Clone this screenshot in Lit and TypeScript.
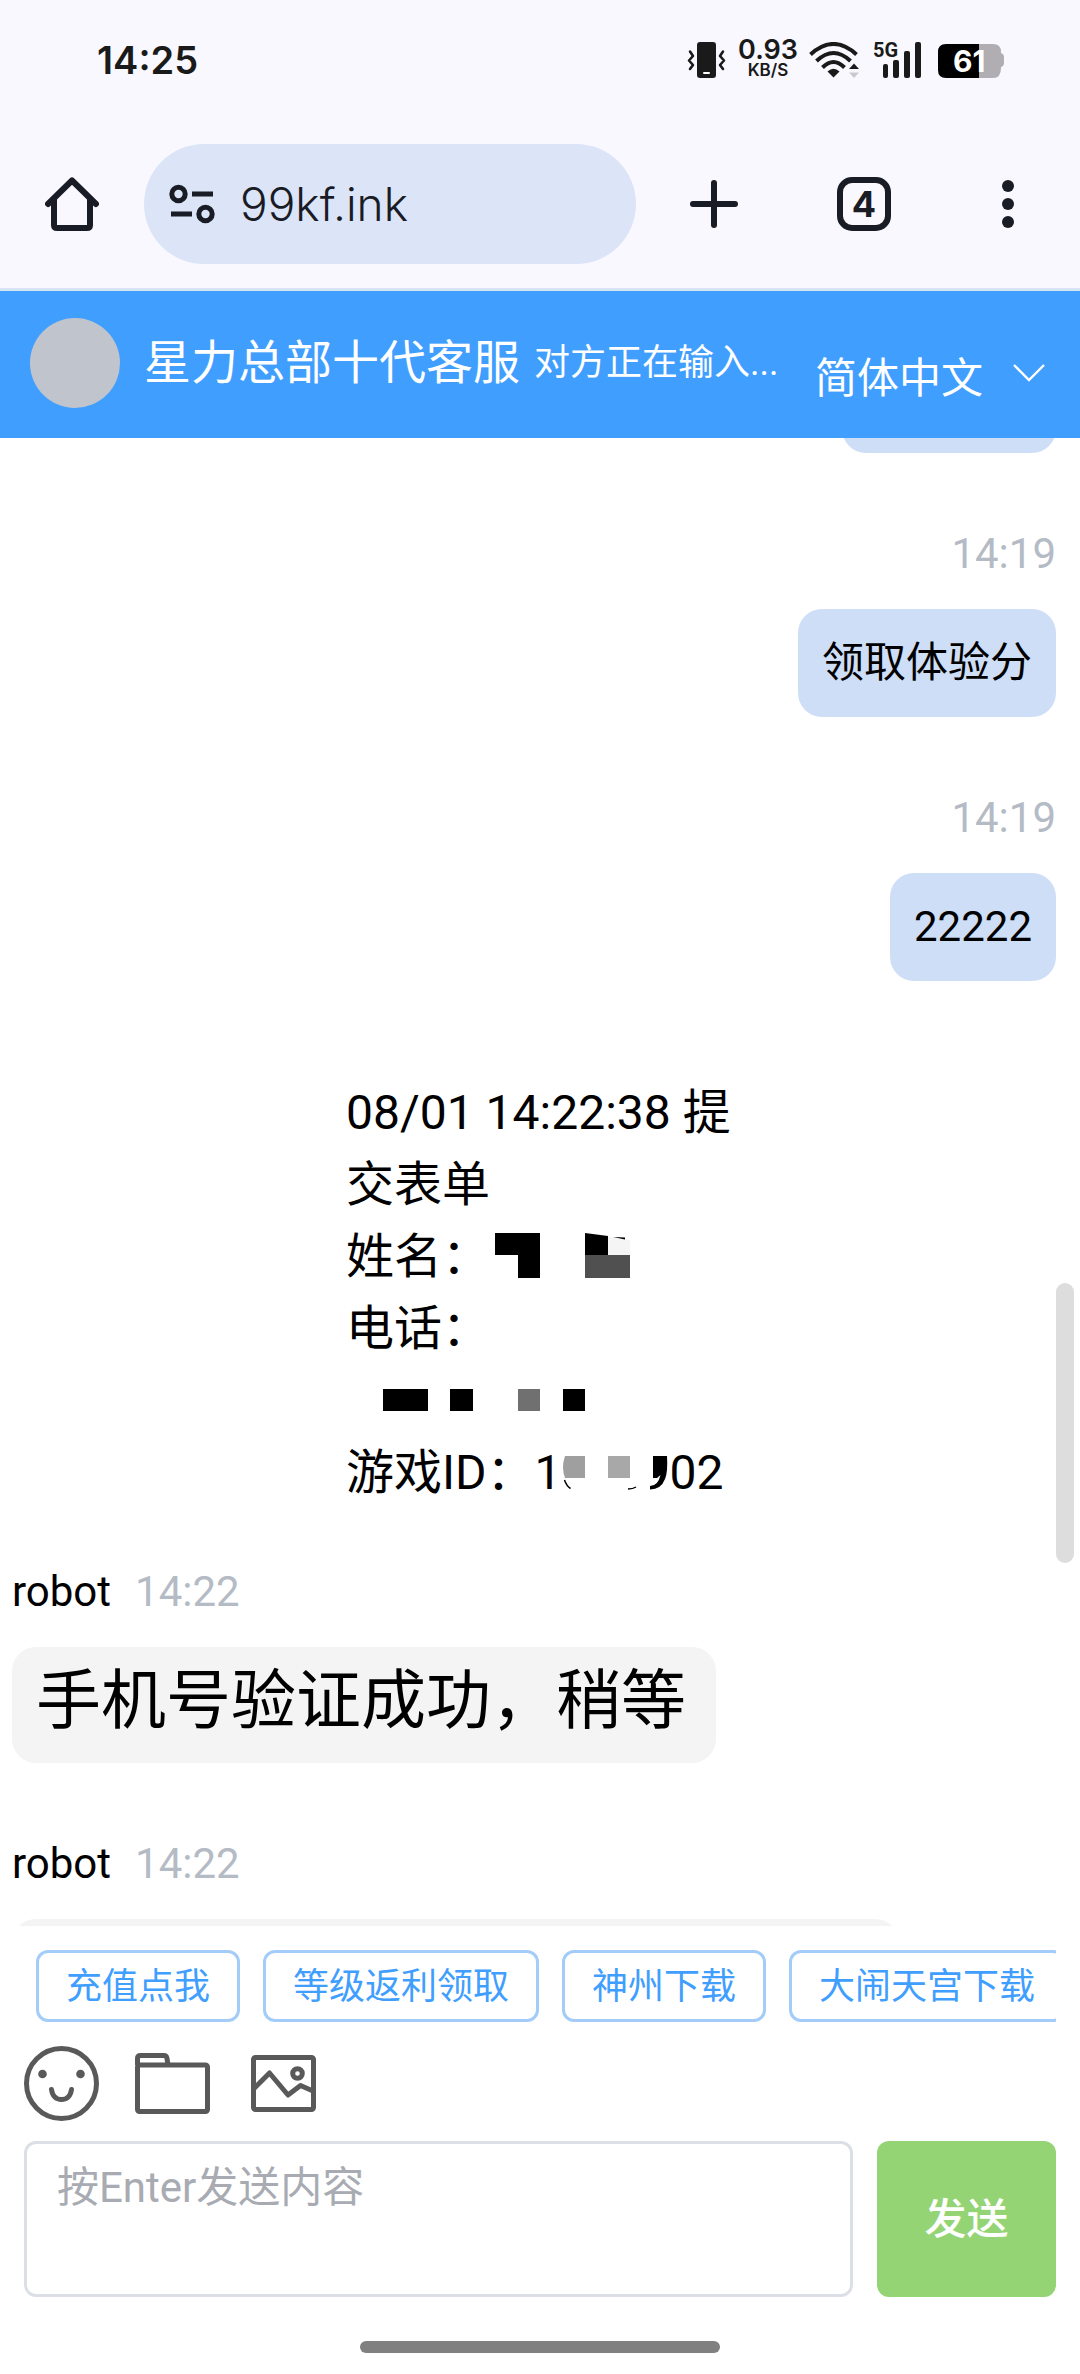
import { LitElement, html, css, svg } from "lit";
import { customElement } from "lit/decorators.js";

const INK = "#1a1a1a";
const NAVY = "#191b25";

@customElement("status-bar")
class StatusBar extends LitElement {
  static styles = css`
    :host {
      display: block;
    }
    .bar {
      display: flex;
      align-items: center;
      justify-content: space-between;
      height: 120px;
      padding: 0 76px 0 97px;
      box-sizing: border-box;
      font-family: Inter, "Liberation Sans", sans-serif;
      color: #1a1a1a;
    }
    .clock {
      font-size: 38px;
      font-weight: 600;
      line-height: 48px;
    }
    .icons {
      display: flex;
      align-items: center;
      gap: 12px;
    }
    .icons svg {
      display: block;
    }
    .speed {
      display: flex;
      flex-direction: column;
      align-items: center;
      width: 58px;
      font-weight: 600;
    }
    .rate {
      font-size: 27px;
      line-height: 20px;
    }
    .unit {
      font-size: 17px;
      line-height: 20px;
    }
    .net {
      font: 700 20px Roboto, sans-serif;
    }
    .level {
      font: 700 30px Inter, sans-serif;
    }
  `;
  render() {
    return html`
      <div class="bar">
        <time class="clock">14:25</time>
        <div class="icons">
          <svg width="40" height="36" viewBox="0 0 40 36" role="img" aria-label="振动">
            <rect x="10" y="0" width="19" height="36" rx="3" fill=${INK} />
            <rect x="16" y="30" width="7" height="2" rx="1" fill="#fff" />
            <path
              d="M3 9.500l3 4.500l-4 4.500l4 4.500l-3 4M36 9.500l-3 4.500l4 4.500l-4 4.500l3 4"
              fill="none" stroke=${INK} stroke-width="2.600" stroke-linecap="round" stroke-linejoin="round" />
          </svg>
          <div class="speed"><span class="rate">0.93</span><span class="unit">KB/S</span></div>
          <svg width="52" height="36" viewBox="0 0 52 36" role="img" aria-label="Wi-Fi">
            <g fill="none" stroke=${INK} stroke-width="4">
              <path d="M1.500 12.500Q24.500 -8.500 47.500 12.500" />
              <path d="M7.500 19Q24.500 3 41.500 19" />
              <path d="M13.500 25.500Q24.500 14.500 35.500 25.500" />
            </g>
            <path d="M18.500 29.500Q24.500 24 30.500 29.500L24.500 35.500Z" fill=${INK} />
            <path d="M40 27L45 21.500L50 27Z" fill=${INK} />
            <path d="M40 30.500L45 36L50 30.500Z" fill="#c9c9d0" />
          </svg>
          <svg width="53" height="44" viewBox="0 -4 53 44" role="img" aria-label="5G 信号">
            <text class="net" x="0" y="15" fill=${INK}>5G</text>
            <rect x="10" y="22" width="5" height="14" rx="2" fill=${INK} />
            <rect x="20" y="18" width="6" height="18" rx="2" fill=${INK} />
            <rect x="31" y="9" width="6" height="27" rx="2" fill=${INK} />
            <rect x="42" y="0" width="6" height="36" rx="2" fill=${INK} />
          </svg>
          <svg width="66" height="36" viewBox="0 0 66 36" role="img" aria-label="电量 61">
            <path d="M41 2h14q8 0 8 8v1q3 1 3 4v6q0 3-3 4v1q0 10-8 10h-14z" fill="#b0aeb3" />
            <path d="M41 2h-33q-8 0-8 8v18q0 8 8 8h33z" fill="#000" />
            <text class="level" x="15" y="30" fill="#fff">61</text>
          </svg>
        </div>
      </div>
    `;
  }
}

@customElement("browser-bar")
class BrowserBar extends LitElement {
  static styles = css`
    :host {
      display: block;
    }
    .bar {
      display: flex;
      align-items: center;
      height: 168px;
      padding: 0 45px;
      box-sizing: border-box;
    }
    button {
      display: block;
      padding: 0;
      border: 0;
      background: none;
      font: inherit;
      color: #191b25;
    }
    svg {
      display: block;
    }
    .address {
      flex: 1;
      display: flex;
      align-items: center;
      gap: 24px;
      min-width: 0;
      height: 120px;
      margin: 0 51px 0 45px;
      padding: 0 24px;
      border-radius: 60px;
      box-sizing: border-box;
      background: #dce4f8;
    }
    .url {
      flex: 1;
      min-width: 0;
      padding: 0;
      border: 0;
      outline: 0;
      background: none;
      color: #191b25;
      font: 300 46px/60px Inter, Roboto, sans-serif;
    }
    .actions {
      display: flex;
      gap: 90px;
    }
    .count {
      font: 700 36px Inter, sans-serif;
    }
  `;
  render() {
    return html`
      <nav class="bar">
        <button aria-label="主页">
          <svg width="54" height="54" viewBox="0 0 54 54" fill="none" stroke=${NAVY} stroke-width="6" stroke-linecap="round" stroke-linejoin="round">
            <path d="M3 27L27 3.500L51 27" />
            <path d="M9 22V48q0 3 3 3H42q3 0 3-3V22" />
          </svg>
        </button>
        <div class="address">
          <svg width="48" height="42" viewBox="0 0 48 42" fill="none" stroke=${NAVY} stroke-width="5" aria-hidden="true">
            <circle cx="10.500" cy="11" r="6.700" />
            <path d="M24 11H45M3 31H24" />
            <circle cx="37.500" cy="31" r="6.700" />
          </svg>
          <input class="url" aria-label="网址" value="99kf.ink" />
        </div>
        <div class="actions">
          <button aria-label="新标签页">
            <svg width="60" height="54" viewBox="0 0 60 54" stroke=${NAVY} stroke-width="6" stroke-linecap="round">
              <path d="M27 6V48M6 27H48" />
            </svg>
          </button>
          <button aria-label="标签页 4">
            <svg width="54" height="54" viewBox="0 0 54 54">
              <rect x="3" y="3" width="48" height="48" rx="12" fill="none" stroke=${NAVY} stroke-width="6" />
              <text class="count" x="27" y="40" text-anchor="middle" fill=${NAVY}>4</text>
            </svg>
          </button>
          <button aria-label="更多">
            <svg width="54" height="54" viewBox="0 0 54 54" fill=${NAVY}>
              <circle cx="27" cy="9" r="6" />
              <circle cx="27" cy="27" r="6" />
              <circle cx="27" cy="45" r="6" />
            </svg>
          </button>
        </div>
      </nav>
    `;
  }
}

@customElement("chat-message")
class ChatMessage extends LitElement {
  static properties = {
    sender: { type: String },
    time: { type: String },
    text: { type: String },
    mine: { type: Boolean },
    large: { type: Boolean },
    blank: { type: Number },
  };
  declare sender: string;
  declare time: string;
  declare text: string;
  declare mine: boolean;
  declare large: boolean;
  declare blank: number;

  static styles = css`
    :host {
      display: block;
      margin-bottom: 76px;
    }
    .message {
      display: flex;
      flex-direction: column;
      align-items: flex-start;
      gap: 30px;
    }
    .mine {
      align-items: flex-end;
    }
    .label {
      display: flex;
      gap: 24px;
      font-size: 42px;
      line-height: 50px;
    }
    .time {
      color: #b4bbc5;
    }
    .bubble {
      min-height: 108px;
      padding: 22px 24px;
      border-radius: 24px;
      box-sizing: border-box;
      background: #f4f4f4;
      font-size: 42px;
      line-height: 64px;
    }
    .mine .bubble {
      background: #cddef6;
    }
    .large {
      padding: 18px 30px 26px 24px;
      font-size: 65px;
      line-height: 72px;
    }
  `;
  render() {
    const size = this.blank ? `width:${this.blank}px` : "";
    return html`
      <article class="message ${this.mine ? "mine" : ""}">
        ${this.time
          ? html`<div class="label">
              ${this.sender ? html`<span>${this.sender}</span>` : ""}<time class="time">${this.time}</time>
            </div>`
          : ""}
        <div class="bubble ${this.large ? "large" : ""}" style=${size}>${this.text ?? ""}</div>
      </article>
    `;
  }
}

type Block = [number, number, number, number, string];
const blocks = (list: Block[]) =>
  list.map(([x, y, w, h, fill]) => svg`<rect x=${x} y=${y} width=${w} height=${h} fill=${fill} />`);

@customElement("app-root")
class AppRoot extends LitElement {
  static styles = css`
    :host {
      display: block;
    }
    .page {
      display: flex;
      flex-direction: column;
      height: 100vh;
      background: #fff;
      color: #000;
      font-family: Roboto, "Noto Sans CJK SC", sans-serif;
    }
    .chrome {
      background: #f9f8ff;
      border-bottom: 3px solid #d6e4f6;
    }
    .header {
      display: flex;
      align-items: center;
      height: 147px;
      padding: 0 30px 3px;
      box-sizing: border-box;
      background: #409eff;
      color: #fff;
    }
    .avatar {
      width: 90px;
      height: 90px;
      margin-right: 24px;
      border-radius: 50%;
      background: #c0c4cc;
    }
    .title {
      flex: 1;
      display: flex;
      align-items: center;
      gap: 14px;
      margin: 0;
      font-size: 47px;
      font-weight: 400;
      line-height: 60px;
      white-space: nowrap;
    }
    .typing {
      font-size: 36px;
    }
    .lang {
      display: grid;
      align-items: center;
      margin-top: 32px;
    }
    .lang select,
    .lang svg {
      grid-area: 1 / 1;
    }
    .lang svg {
      justify-self: end;
      margin: 0 4px 12px 0;
      pointer-events: none;
    }
    .lang select {
      width: 235px;
      padding: 0;
      border: 0;
      appearance: none;
      background: none;
      color: #fff;
      font: inherit;
      font-size: 42px;
      line-height: 60px;
    }
    .chat {
      position: relative;
      flex: 1;
      min-height: 0;
      overflow: hidden;
    }
    .list {
      margin-top: -93px;
      padding: 0 24px 0 12px;
    }
    .thumb {
      position: absolute;
      bottom: 363px;
      right: 6px;
      width: 18px;
      height: 280px;
      border-radius: 9px;
      background: #dddddd;
    }
    .form {
      width: 388px;
      margin: -57px auto 58px;
      padding: 77px 0 0 12px;
      font-size: 48px;
      line-height: 72px;
    }
    .form p {
      display: flex;
      align-items: center;
      margin: 0;
      min-height: 72px;
    }
    .form svg {
      flex: none;
    }
    .form .wrap {
      display: block;
    }
    .footer {
      display: flex;
      flex-direction: column;
      padding: 24px 24px 21px;
      background: #fff;
    }
    .chips {
      display: flex;
      gap: 23px;
      padding-left: 12px;
      overflow: hidden;
    }
    .chip {
      flex: none;
      height: 72px;
      padding: 2px 27px 0;
      border: 3px solid #a3cdf8;
      border-radius: 12px;
      background: #fff;
      color: #409eff;
      font: inherit;
      font-size: 36px;
      line-height: 60px;
    }
    .tools {
      display: flex;
      gap: 36px;
      margin: 24px 0 20px;
    }
    .tool {
      padding: 0;
      border: 0;
      background: none;
    }
    .tool svg {
      display: block;
    }
    .compose {
      display: flex;
      gap: 24px;
    }
    .input {
      flex: 1;
      min-width: 0;
      height: 156px;
      padding: 14px 30px;
      border: 3px solid #dcdfe6;
      border-radius: 12px;
      box-sizing: border-box;
      resize: none;
      background: #fff;
      font: inherit;
      font-size: 42px;
      line-height: 60px;
    }
    .input::placeholder {
      color: #a8abb2;
      opacity: 1;
    }
    .send {
      width: 179px;
      padding: 0 0 8px;
      border: 0;
      border-radius: 12px;
      background: #95d475;
      color: #fff;
      font: inherit;
      font-size: 42px;
      font-weight: 500;
    }
    .handle {
      align-self: center;
      width: 360px;
      height: 12px;
      margin-top: 44px;
      border-radius: 6px;
      background: #808080;
    }
  `;
  render() {
    const chips = ["充值点我", "等级返利领取", "神州下载", "大闹天宫下载"];
    return html`
      <main class="page">
        <div class="chrome">
          <status-bar></status-bar>
          <browser-bar></browser-bar>
        </div>
        <header class="header">
          <div class="avatar"></div>
          <h1 class="title">星力总部十代客服<span class="typing">对方正在输入...</span></h1>
          <div class="lang">
            <select aria-label="语言">
              <option>简体中文</option>
            </select>
            <svg width="34" height="20" viewBox="0 0 34 20" fill="none" stroke="#fff" stroke-width="2.400" aria-hidden="true">
              <path d="M2 2L17 17L32 2" />
            </svg>
          </div>
        </header>
        <section class="chat">
          <div class="list">
            <chat-message mine blank="214"></chat-message>
            <chat-message mine time="14:19" text="领取体验分"></chat-message>
            <chat-message mine time="14:19" text="22222"></chat-message>
            <div class="form">
              <p class="wrap">08/01 14:22:38 提交表单</p>
              <p>
                姓名：
                <svg width="144" height="48" viewBox="0 0 144 48" aria-hidden="true">
                  ${blocks([
                    [5, 0, 45, 22, "#000"],
                    [28, 22, 22, 23, "#000"],
                    [95, 22, 45, 23, "#505050"],
                  ])}
                  <path d="M95 0L118 3V22H95Z" fill="#000" />
                  <path d="M118 3.500L140 7V22H118Z" fill="#f5f5f5" />
                  <path d="M123 4L135 4.500V6.500Z" fill="#000" />
                </svg>
              </p>
              <p>电话：</p>
              <p>
                <svg width="240" height="24" viewBox="0 0 240 24" aria-hidden="true">
                  ${blocks([
                    [37, 0, 45, 22, "#000"],
                    [104, 0, 23, 22, "#000"],
                    [172, 0, 22, 22, "#707070"],
                    [217, 0, 22, 22, "#000"],
                  ])}
                </svg>
              </p>
              <p>
                游戏ID：1<svg width="108" height="36" viewBox="3 0 108 36" aria-hidden="true">
                  ${blocks([[49, 1, 22, 22, "#a8a8a8"]])}
                  <path d="M6 1H26V23H6Q2 12 6 1Z" fill="#9f9f9f" />
                  <path d="M5.500 25Q7.500 31 11.500 33.500M69 34Q74 34 77 32" fill="none" stroke="#000" stroke-width="1.500" />
                  <path d="M94 1H108Q109 17 106 24Q102 34.500 91 34.500V31Q99 31 101.500 20L98 23H94Z" fill="#000" />
                </svg>02
              </p>
            </div>
            <chat-message sender="robot" time="14:22" text="手机号验证成功，稍等" large></chat-message>
            <chat-message sender="robot" time="14:22" blank="887"></chat-message>
          </div>
          <div class="thumb"></div>
        </section>
        <footer class="footer">
          <div class="chips">${chips.map((c) => html`<button class="chip">${c}</button>`)}</div>
          <div class="tools">
            <button class="tool" aria-label="表情">
              <svg width="75" height="75" viewBox="0 0 75 75" fill="none" stroke="#595959" stroke-width="5" stroke-linecap="round">
                <circle cx="37.500" cy="37.500" r="35" />
                <path d="M27.500 43.500Q29 53.500 37.500 53.500Q46 53.500 47.500 43.500" />
                <circle cx="18.500" cy="28" r="4.300" fill="#595959" stroke="none" />
                <circle cx="56.500" cy="28" r="4.300" fill="#595959" stroke="none" />
              </svg>
            </button>
            <button class="tool" aria-label="文件">
              <svg width="75" height="75" viewBox="0 0 75 75" fill="none" stroke="#595959" stroke-width="5" stroke-linejoin="round">
                <path d="M2.500 19V12.500Q2.500 9.500 5.500 9.500H29Q31.500 9.500 32 12.500L33 19" />
                <rect x="2.500" y="19" width="70" height="46.500" rx="2" />
              </svg>
            </button>
            <button class="tool" aria-label="图片">
              <svg width="75" height="75" viewBox="0 0 75 75" fill="none" stroke="#595959" stroke-width="5" stroke-linejoin="round">
                <rect x="7.500" y="11.500" width="60" height="52" rx="2" />
                <path d="M7.500 43L23.500 27L42 49L54.500 39.500L67 45" />
                <circle cx="51.500" cy="27.500" r="4.800" />
              </svg>
            </button>
          </div>
          <div class="compose">
            <textarea class="input" aria-label="消息" placeholder="按Enter发送内容"></textarea>
            <button class="send">发送</button>
          </div>
          <div class="handle"></div>
        </footer>
      </main>
    `;
  }
}
